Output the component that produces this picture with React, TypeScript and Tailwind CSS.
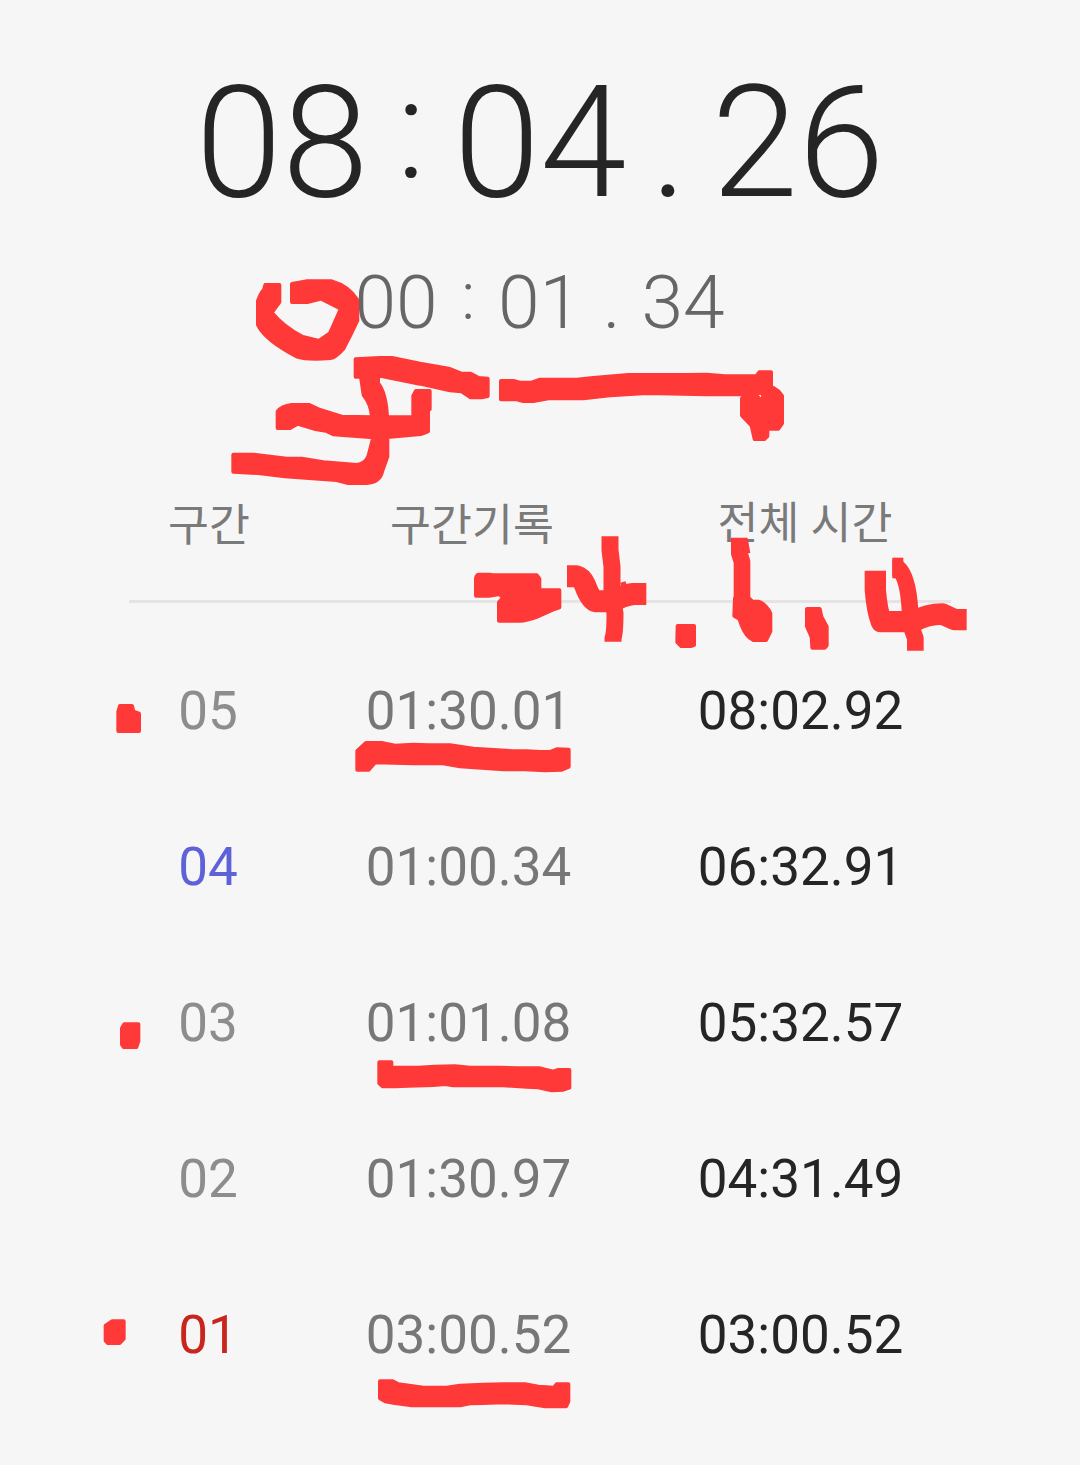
type Lap = { no: string; lap: string; total: string; tone: string };

const laps: Lap[] = [
  { no: "05", lap: "01:30.01", total: "08:02.92", tone: "text-[#8d8d8d]" },
  { no: "04", lap: "01:00.34", total: "06:32.91", tone: "text-[#5d62d9]" },
  { no: "03", lap: "01:01.08", total: "05:32.57", tone: "text-[#8d8d8d]" },
  { no: "02", lap: "01:30.97", total: "04:31.49", tone: "text-[#8d8d8d]" },
  { no: "01", lap: "03:00.52", total: "03:00.52", tone: "text-[#c8261d]" },
];

const columns = "grid grid-cols-[160px_360px_302px] text-center";

/* Freehand red marker, each group drawn at three times its final size. */
function MarkerInk() {
  return (
    <svg
      className="pointer-events-none absolute inset-0 h-full w-full"
      viewBox="0 0 1080 1465"
      fill="#ff3838"
      stroke="#ff3838"
      strokeWidth="12"
      strokeLinejoin="round"
      aria-hidden="true"
    >
      <g transform="translate(220 260) scale(.33333)">
        <path d="M136 75H178V126L155 158Q190 200 248 231L297 243L330 220L363 146L304 116L262 126H216V72L262 64H335Q385 78 411 119L412 181L389 229L370 266Q345 294 330 294Q265 300 232 290Q134 239 114 194V123Q122 100 132 90Z" />
        <path d="M407 298L480 294H516L600 311L686 326L724 341H752L776 354L803 356V408L785 412H752L725 394L690 391L600 371L474 346V370Q498 400 501 472H580V408L588 393H629V448L624 448V514L602 522L502 531V590L487 632Q480 667 440 669H385L350 660L195 649L115 639L40 635V584H100L200 596H245L310 607L410 615Q435 612 445 590L460 532L340 523L318 512L282 506L232 491L210 504H173V455Q185 438 215 435H268L300 450L365 470L456 472Q454 433 431 405L423 350H407Z" />
      </g>
      <g transform="translate(480 260) scale(.33333)">
        <path fillRule="evenodd" d="M63 363H100L120 368H155L180 359H290L340 354L445 345L620 345L680 344L735 349L830 348L838 337H873V379L896 395L906 408V490L895 506H862V528L853 537H824L815 497L786 466V416L797 403H680L500 399L390 406L310 415L205 415L160 423H130L110 418H63ZM821 399H849V427Z" />
      </g>
      <g transform="translate(460 490) scale(.33333)">
        <path d="M48 265Q50 254 57 254H88L98 256H230L238 266V301H298V352L278 359L236 378Q198 392 180 392H117V337L130 323L118 312L87 317H48Z" />
        <path d="M653 408H702V465L694 468H664L652 456Z" />
        <g fill="none">
          <path d="M321 259H350Q365 263 375 285Q392 332 408 334H455Q490 316 520 312H559" strokeWidth="66" />
          <path d="M450 139V180L456 230V320L465 370Q465 430 459 445V455" strokeWidth="51" />
          <path d="M395 305L430 328M484 290L500 285" strokeWidth="24" />
        </g>
      </g>
      <g transform="translate(700 490) scale(.33333)">
        <path d="M321 357H359L364 380L380 410V466L374 473H337L335 441L321 409Z" />
        <g fill="none">
          <path d="M118 143V190L126 215V330" strokeWidth="50" />
          <path d="M139 149L146 190" strokeWidth="10" />
          <path d="M526 242V300Q531 363 544 395H640Q682 372 727 372L764 389H800" strokeWidth="64" />
          <path d="M577 234H594Q624 260 630 360V400L646 445V482" strokeWidth="50" />
          <path d="M577 234H610" strokeWidth="62" />
        </g>
        <path d="M105 325L150 328L157 335H175Q197 342 211 370V424L198 450H160Q138 440 125 405L118 386L103 377Z" />
      </g>
      <g transform="translate(90 670) scale(.33333)">
        <path d="M90 108H126L130 125L147 131V183H85V125Z" />
        <path d="M828 219H875L915 227L970 224L1015 226H1080L1150 236L1270 244H1310L1350 246H1380L1400 238L1436 239V290L1415 299L1365 301L1290 297L1240 298L1110 289L1055 279L970 280L855 277L836 299H802V243Z" />
      </g>
      <g transform="translate(90 990) scale(.33333)">
        <path d="M103 103H145V153L139 171H101L96 163V115Z" />
        <path d="M868 217H904V233L985 233L1035 230L1095 229L1140 233H1230L1280 235H1350L1390 245L1405 240H1438V293L1420 299L1385 301L1345 292L1310 290L1240 286H1090L1065 282L1030 285L955 287L915 289H878L868 280Z" />
      </g>
      <g transform="translate(90 1300) scale(.33333)">
        <path d="M66 64H101V116L89 129H54L47 122V77Z" />
        <path d="M870 244H908L925 253L1000 263H1070L1110 257L1180 254L1240 253H1305L1345 260L1392 263L1400 253H1435V304L1428 319H1365L1310 310L1240 307L1180 309L1140 310L1110 316H965L910 308L886 304L870 295Z" />
      </g>
    </svg>
  );
}

export default function App() {
  return (
    <main className="relative h-[1465px] w-[1080px] overflow-hidden bg-[#f6f6f6] pt-[65px] font-['Roboto','Noto_Sans_CJK_KR',sans-serif] text-[#252525]">
      <div className="flex h-[156px] justify-center text-[156px] leading-[156px] font-light">
        <span className="w-[173px]">08</span>
        <span className="-mt-[13px] w-[85px] text-center text-[139px]">:</span>
        <span className="w-[173px]">04</span>
        <span className="w-[85px] text-center">.</span>
        <span className="w-[173px]">26</span>
      </div>
      <div className="mt-[43px] flex h-[76px] justify-center text-[75px] leading-[76px] font-light text-[#666666]">
        <span className="w-[84px]">00</span>
        <span className="-mt-[5px] w-[59.5px] text-center text-[66px]">:</span>
        <span className="w-[84px]">01</span>
        <span className="w-[59.5px] text-center">.</span>
        <span className="w-[84px]">34</span>
      </div>

      <section className="mx-auto mt-[154px] w-[822px]">
        <div className={`${columns} h-[109px] border-b-[3px] border-[#e4e4e4] pt-0.5 text-[44.5px] leading-[60px] text-[#7a7a7a]`}>
          <span>구간</span>
          <span className="pl-1.5">구간기록</span>
          <span className="-mt-0.5 pl-2.5">전체 시간</span>
        </div>
        <div className="pt-[30px]">
          {laps.map((lap) => (
            <div key={lap.no} className={`${columns} h-[156px] text-[53px] leading-[156px]`}>
              <span className={`pr-0.5 ${lap.tone}`}>{lap.no}</span>
              <span className="pr-px text-[#777777]">{lap.lap}</span>
              <span className="pl-px">{lap.total}</span>
            </div>
          ))}
        </div>
      </section>
      <MarkerInk />
    </main>
  );
}
